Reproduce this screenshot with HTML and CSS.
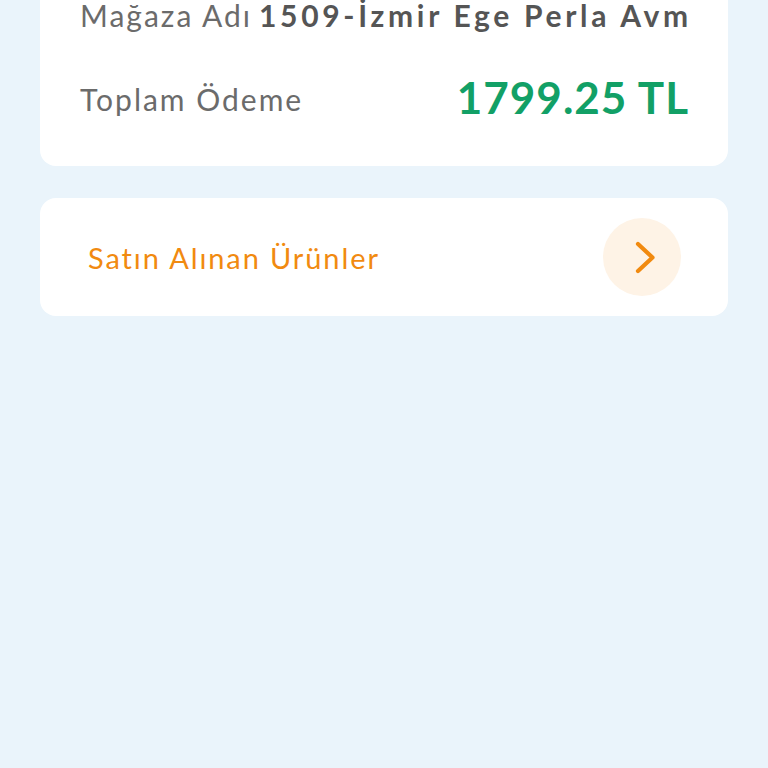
FILE: index.html
```html
<!DOCTYPE html>
<html lang="tr">
<head>
    <meta charset="UTF-8">
    <meta name="viewport" content="width=device-width, initial-scale=1.0">
    <title>Sipariş Detayı</title>
    <link rel="stylesheet" href="styles.css">
</head>
<body>
    <div class="page">
        <div class="card summary">
            <div class="row store">
                <span class="label">Mağaza Adı</span>
                <span class="store-name">1509-İzmir Ege Perla Avm</span>
            </div>
            <div class="row total">
                <span class="label">Toplam Ödeme</span>
                <span class="amount">1799.25 TL</span>
            </div>
        </div>

        <div class="card link">
            <span class="link-text">Satın Alınan Ürünler</span>
            <span class="arrow">
                <svg width="21" height="33" viewBox="0 0 21 33">
                    <path d="M3 3 L17.5 16.5 L3 30" fill="none" stroke="#f18a10" stroke-width="4.2" stroke-linecap="round" stroke-linejoin="round"/>
                </svg>
            </span>
        </div>
    </div>
</body>
</html>
```

FILE: styles.css
```css
:root {
    --bg-color: #eaf4fb;
    --text-grey: #6b6b6b;
    --green: #12a066;
    --orange: #f18a10;
}

html, body {
    margin: 0;
    padding: 0;
}

body {
    background: var(--bg-color);
    font-family: "Lato", "Noto Sans", sans-serif;
    min-height: 100vh;
}

.page {
    padding: 0 40px;
    display: flex;
    flex-direction: column;
    gap: 32px;
}

.card {
    background: #fff;
    border-radius: 16px;
}

.summary {
    margin-top: -40px;
    padding: 35px 40px 41px;
}

.row {
    display: flex;
    white-space: nowrap;
}

.store {
    align-items: baseline;
    height: 40px;
    gap: 7px;
    font-size: 30px;
    line-height: 40px;
}

.total {
    margin-top: 38px;
    align-items: center;
    justify-content: space-between;
    height: 52px;
}

.label {
    color: var(--text-grey);
    font-size: 30px;
    letter-spacing: 2px;
    flex-shrink: 0;
}

.store-name {
    color: #555;
    font-weight: 700;
    letter-spacing: 3.7px;
}

.amount {
    color: var(--green);
    font-size: 44px;
    font-weight: 700;
    letter-spacing: 1px;
    margin-right: -1px;
    margin-bottom: 4px;
}

.link {
    display: flex;
    align-items: center;
    justify-content: space-between;
    height: 118px;
    padding: 0 47px 0 48px;
}

.link-text {
    color: var(--orange);
    font-size: 29px;
    letter-spacing: 1.9px;
}

.arrow {
    width: 78px;
    height: 78px;
    border-radius: 50%;
    background: #fef3e6;
    display: flex;
    align-items: center;
    justify-content: center;
}

.arrow svg {
    margin-left: 6px;
}
```
